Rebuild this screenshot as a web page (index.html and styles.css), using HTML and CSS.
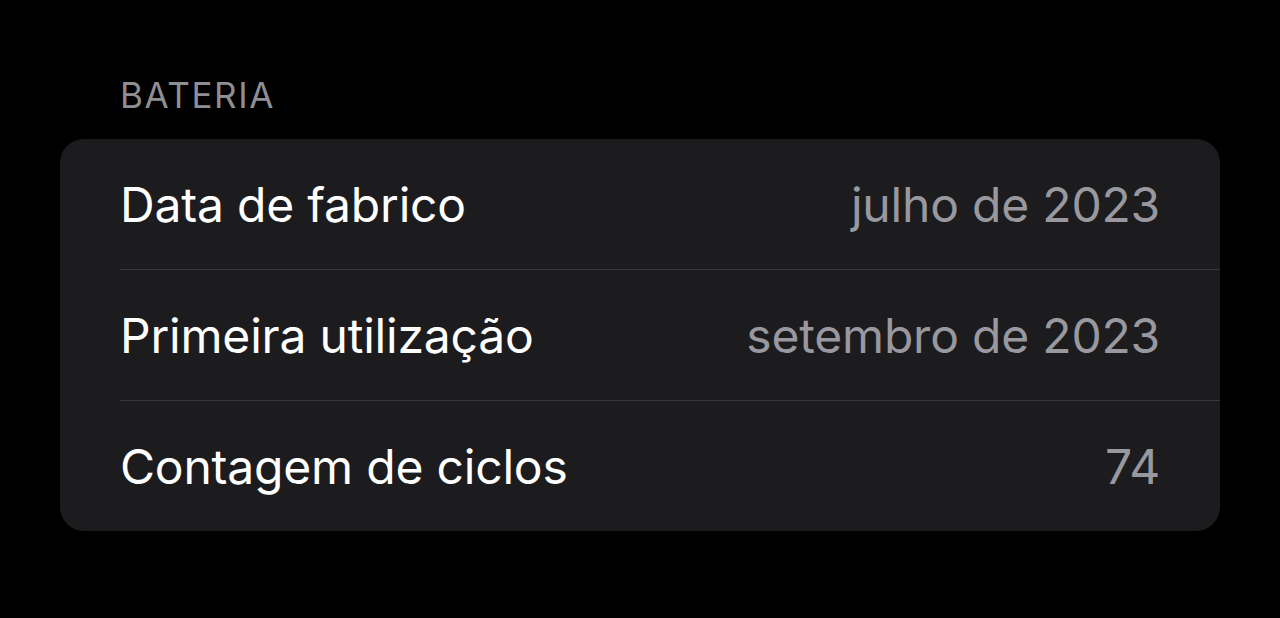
FILE: index.html
```html
<!DOCTYPE html>
<html lang="pt">
<head>
<meta charset="utf-8">
<link rel="stylesheet" href="styles.css">
</head>
<body>
<main class="page">
  <h2 class="section-title">BATERIA</h2>
  <section class="card">
    <div class="row">
      <span class="label">Data de fabrico</span>
      <span class="value">julho de 2023</span>
    </div>
    <div class="row">
      <span class="label">Primeira utilização</span>
      <span class="value">setembro de 2023</span>
    </div>
    <div class="row">
      <span class="label">Contagem de ciclos</span>
      <span class="value">74</span>
    </div>
  </section>
</main>
</body>
</html>
```
FILE: styles.css
```css
html, body {
  margin: 0;
  padding: 0;
  background: #000;
  height: 100%;
}
body {
  font-family: Inter, "Liberation Sans", sans-serif;
  -webkit-font-smoothing: antialiased;
}
.page {
  padding: 74px 60px 0 60px;
}
.section-title {
  margin: 0 0 23px 60px;
  font-size: 35px;
  line-height: 42px;
  font-weight: 400;
  color: #8e8e93;
  letter-spacing: 1.6px;
}
.card {
  background: #1c1c1e;
  border-radius: 24px;
  overflow: hidden;
}
.row {
  display: flex;
  justify-content: space-between;
  align-items: center;
  height: 130px;
  margin-left: 60px;
  padding-right: 60px;
  border-bottom: 1px solid #38383a;
}
.row:last-child {
  border-bottom: none;
}
.label,
.value {
  font-size: 48px;
  letter-spacing: -0.2px;
}
.label {
  color: #fff;
}
.value {
  color: #98989e;
}
```
